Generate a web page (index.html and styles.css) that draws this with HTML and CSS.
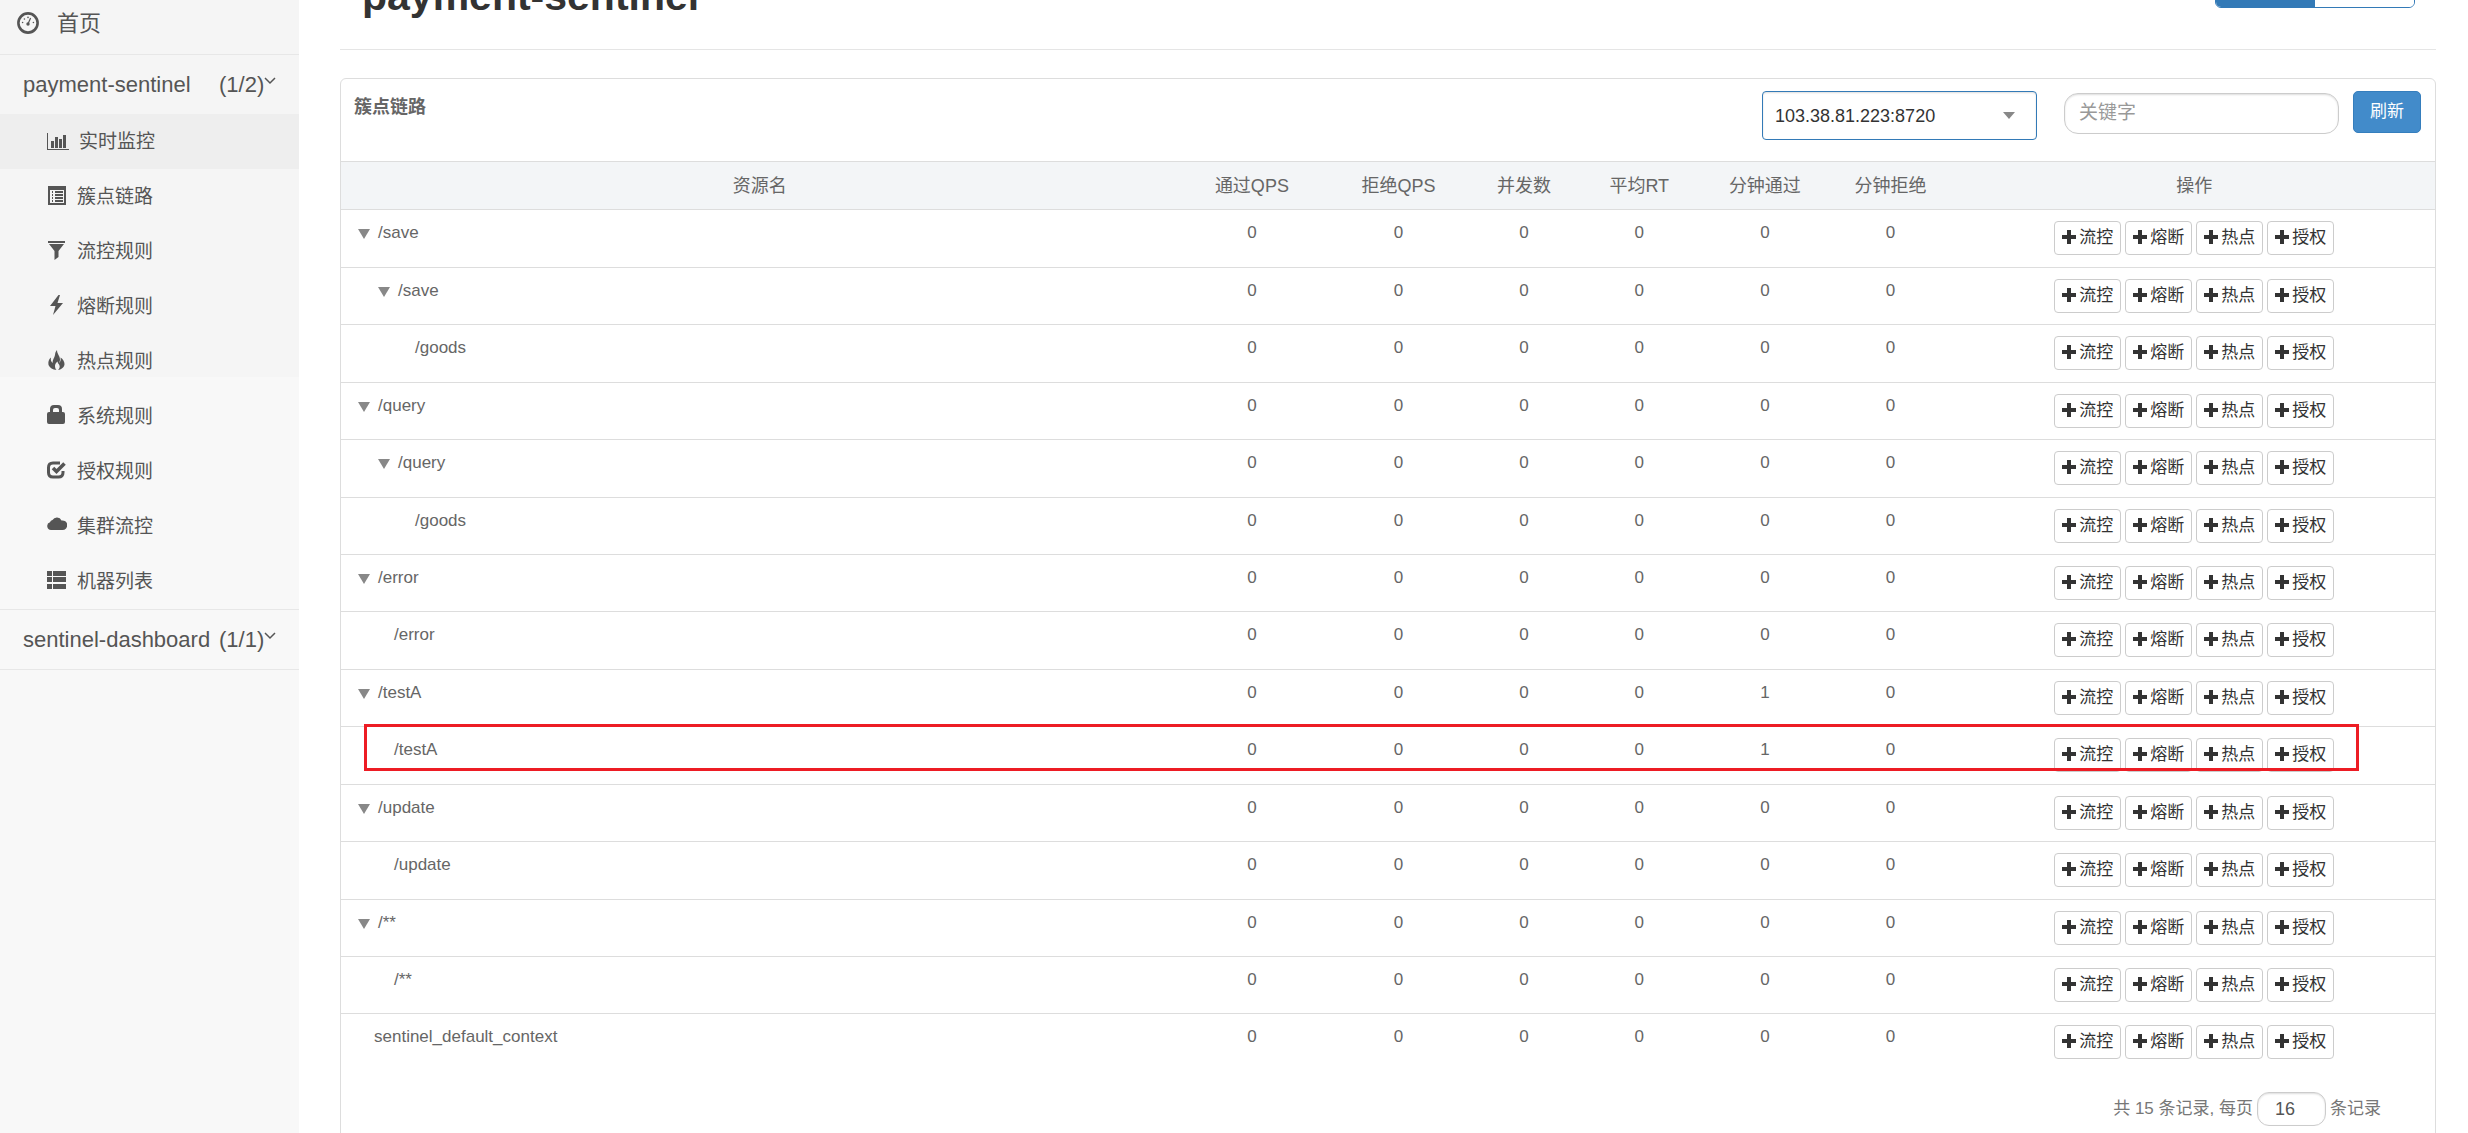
FILE: index.html
```
<!DOCTYPE html>
<html lang="zh-CN">
<head>
<meta charset="utf-8">
<title>payment-sentinel</title>
<link rel="stylesheet" href="styles.css">
</head>
<body>
<div class="layout">
  <nav class="sidebar">
    <a class="home" href="#">
      <svg class="icon-home" viewBox="0 0 22 22"><circle cx="11" cy="11" r="9.6" fill="none" stroke="currentColor" stroke-width="2.6"/><circle cx="11" cy="12" r="1.700" fill="currentColor"/><path d="M11 12L13.600 6" stroke="currentColor" stroke-width="1.200"/><circle cx="5.600" cy="10.500" r=".8"/><circle cx="7.400" cy="7" r=".8"/><circle cx="11" cy="5.400" r=".8"/><circle cx="16.400" cy="10.500" r=".8"/></svg>
      <span>首页</span>
    </a>
    <a class="app" href="#"><span class="app-name">payment-sentinel</span><span>(1/2)</span><svg class="chevron" viewBox="0 0 12 8"><path d="M1 1l5 5 5-5" fill="none" stroke="currentColor" stroke-width="1.5"/></svg></a>
    <ul class="menu">
      <li><a class="active" href="#"><svg class="wide" viewBox="0 0 22 18"><path d="M0 0h1v16h21v1H0zM4 8h3v7H4zM8 4h3v11H8zM12 6h3v9h-3zM16 2h3v13h-3z"/></svg>实时监控</a></li>
      <li><a href="#"><svg viewBox="0 0 20 20"><path fill-rule="evenodd" d="M1 1h18v19H1zM3 5v13h14V5zM5 6h1v2H5zM8 6h8v2H8zM5 9h1v2H5zM8 9h8v2H8zM5 12h1v2H5zM8 12h8v2H8zM5 15h1v2H5zM8 15h8v2H8z"/></svg>簇点链路</a></li>
      <li><a href="#"><svg viewBox="0 0 20 20"><path d="M1 1h17v2H1zM2 4h15l-5.500 7v6l-4 3v-9z"/></svg>流控规则</a></li>
      <li><a href="#"><svg viewBox="0 0 20 20"><path d="M11.500 0L3 11h5.500L6 20 16 8h-5.500L13 0z"/></svg>熔断规则</a></li>
      <li><a href="#"><svg viewBox="0 0 20 20"><path d="M10 0C10 4 13 6 13 9.500c0 1.500-.5 2.500-1 3.500 1.500-1 2-3 1.500-5.500 2.500 1.500 4 4 4 6.500 0 3-2.500 5.300-6.500 6 1.500-1.500 2-3 1.500-4.500-.3-1.500-1.800-2-2-4C9 13 8 14 8 16c0 1.500.5 3 1.500 4-4-.5-6.500-2-8-5C1 12 1.500 9.500 4 7.500 3.500 10 4 11.500 5.500 13c0-3.500 2-5 2.500-8C8.300 3 8.500 1.500 10 0z"/></svg>热点规则</a></li>
      <li><a href="#"><svg viewBox="0 0 20 20"><path fill-rule="evenodd" d="M3 7V4q0-4 4-4h4q4 0 4 4v3h1q2 0 2 2v8q0 2-2 2H2q-2 0-2-2V9q0-2 2-2zM6 7h6V5q0-2-2-2H8q-2 0-2 2z"/></svg>系统规则</a></li>
      <li><a href="#"><svg viewBox="0 0 20 20"><path d="M13 3H6Q1.500 3 1.500 7.500v5Q1.500 17 6 17h5.500q4.500 0 4.500-4.500V11" fill="none" stroke="currentColor" stroke-width="3"/><path d="M6 8l3.500 3.500L17.500 3.500" fill="none" stroke="currentColor" stroke-width="3.600"/></svg>授权规则</a></li>
      <li><a href="#"><svg viewBox="0 0 20 20"><path d="M4 15a4 4 0 0 1-1-7.800A3 3 0 0 1 5.500 5 5 5 0 0 1 14.500 5.500 4.800 4.800 0 1 1 15.500 15z"/></svg>集群流控</a></li>
      <li><a href="#"><svg viewBox="0 0 20 20"><path d="M0 1h5v5H0zM6 1h13v5H6zM0 7h5v5H0zM6 7h13v5H6zM0 14h5v5H0zM6 14h13v5H6z"/></svg>机器列表</a></li>
    </ul>
    <a class="app bordered" href="#"><span class="app-name">sentinel-dashboard</span><span>(1/1)</span><svg class="chevron" viewBox="0 0 12 8"><path d="M1 1l5 5 5-5" fill="none" stroke="currentColor" stroke-width="1.5"/></svg></a>
  </nav>

  <main class="content">
    <header class="page-header">
      <h1>payment-sentinel</h1>
      <div class="view-switch">
        <button type="button" class="on" aria-label="树状视图"></button>
        <button type="button" aria-label="列表视图"></button>
      </div>
    </header>

    <section class="panel">
      <div class="toolbar">
        <h2>簇点链路</h2>
        <select class="machine" aria-label="机器"><option>103.38.81.223:8720</option></select>
        <input class="keyword" type="text" placeholder="关键字" aria-label="关键字">
        <button class="refresh" type="button">刷新</button>
      </div>
      <table class="resources">
        <colgroup><col class="c-name"><col class="c-qps"><col class="c-qps"><col class="c-thread"><col class="c-stat"><col class="c-stat"><col class="c-stat"><col></colgroup>
        <thead>
          <tr><th>资源名</th><th>通过QPS</th><th>拒绝QPS</th><th>并发数</th><th>平均RT</th><th>分钟通过</th><th>分钟拒绝</th><th>操作</th></tr>
        </thead>
        <tbody>
          <tr><td class="name"><button class="toggle" type="button" aria-label="收起"></button>/save</td><td>0</td><td>0</td><td>0</td><td>0</td><td>0</td><td>0</td><td class="ops"><button type="button">流控</button><button type="button">熔断</button><button type="button">热点</button><button type="button">授权</button></td></tr>
          <tr><td class="name level-2"><button class="toggle" type="button" aria-label="收起"></button>/save</td><td>0</td><td>0</td><td>0</td><td>0</td><td>0</td><td>0</td><td class="ops"><button type="button">流控</button><button type="button">熔断</button><button type="button">热点</button><button type="button">授权</button></td></tr>
          <tr><td class="name leaf-3">/goods</td><td>0</td><td>0</td><td>0</td><td>0</td><td>0</td><td>0</td><td class="ops"><button type="button">流控</button><button type="button">熔断</button><button type="button">热点</button><button type="button">授权</button></td></tr>
          <tr><td class="name"><button class="toggle" type="button" aria-label="收起"></button>/query</td><td>0</td><td>0</td><td>0</td><td>0</td><td>0</td><td>0</td><td class="ops"><button type="button">流控</button><button type="button">熔断</button><button type="button">热点</button><button type="button">授权</button></td></tr>
          <tr><td class="name level-2"><button class="toggle" type="button" aria-label="收起"></button>/query</td><td>0</td><td>0</td><td>0</td><td>0</td><td>0</td><td>0</td><td class="ops"><button type="button">流控</button><button type="button">熔断</button><button type="button">热点</button><button type="button">授权</button></td></tr>
          <tr><td class="name leaf-3">/goods</td><td>0</td><td>0</td><td>0</td><td>0</td><td>0</td><td>0</td><td class="ops"><button type="button">流控</button><button type="button">熔断</button><button type="button">热点</button><button type="button">授权</button></td></tr>
          <tr><td class="name"><button class="toggle" type="button" aria-label="收起"></button>/error</td><td>0</td><td>0</td><td>0</td><td>0</td><td>0</td><td>0</td><td class="ops"><button type="button">流控</button><button type="button">熔断</button><button type="button">热点</button><button type="button">授权</button></td></tr>
          <tr><td class="name leaf-2">/error</td><td>0</td><td>0</td><td>0</td><td>0</td><td>0</td><td>0</td><td class="ops"><button type="button">流控</button><button type="button">熔断</button><button type="button">热点</button><button type="button">授权</button></td></tr>
          <tr><td class="name"><button class="toggle" type="button" aria-label="收起"></button>/testA</td><td>0</td><td>0</td><td>0</td><td>0</td><td>1</td><td>0</td><td class="ops"><button type="button">流控</button><button type="button">熔断</button><button type="button">热点</button><button type="button">授权</button></td></tr>
          <tr class="marked"><td class="name leaf-2">/testA<span class="marker"></span></td><td>0</td><td>0</td><td>0</td><td>0</td><td>1</td><td>0</td><td class="ops"><button type="button">流控</button><button type="button">熔断</button><button type="button">热点</button><button type="button">授权</button></td></tr>
          <tr><td class="name"><button class="toggle" type="button" aria-label="收起"></button>/update</td><td>0</td><td>0</td><td>0</td><td>0</td><td>0</td><td>0</td><td class="ops"><button type="button">流控</button><button type="button">熔断</button><button type="button">热点</button><button type="button">授权</button></td></tr>
          <tr><td class="name leaf-2">/update</td><td>0</td><td>0</td><td>0</td><td>0</td><td>0</td><td>0</td><td class="ops"><button type="button">流控</button><button type="button">熔断</button><button type="button">热点</button><button type="button">授权</button></td></tr>
          <tr><td class="name"><button class="toggle" type="button" aria-label="收起"></button>/**</td><td>0</td><td>0</td><td>0</td><td>0</td><td>0</td><td>0</td><td class="ops"><button type="button">流控</button><button type="button">熔断</button><button type="button">热点</button><button type="button">授权</button></td></tr>
          <tr><td class="name leaf-2">/**</td><td>0</td><td>0</td><td>0</td><td>0</td><td>0</td><td>0</td><td class="ops"><button type="button">流控</button><button type="button">熔断</button><button type="button">热点</button><button type="button">授权</button></td></tr>
          <tr><td class="name leaf-1">sentinel_default_context</td><td>0</td><td>0</td><td>0</td><td>0</td><td>0</td><td>0</td><td class="ops"><button type="button">流控</button><button type="button">熔断</button><button type="button">热点</button><button type="button">授权</button></td></tr>
        </tbody>
      </table>
      <footer class="pager">
        <label for="page-size">共 15 条记录, 每页</label>
        <input id="page-size" type="text" value="16">
        <span>条记录</span>
      </footer>
    </section>
  </main>
</div>
</body>
</html>
```
FILE: styles.css
```
* {
  box-sizing: border-box;
}

body {
  margin: 0;
  height: 100vh;
  overflow: hidden;
  background: #fff;
  color: #666;
  font: 400 17px/24px "Liberation Sans", "Noto Sans CJK SC", sans-serif;
}

button,
input,
select {
  margin: 0;
  font: inherit;
}

.layout {
  display: flex;
  min-height: 100vh;
}

/* Sidebar */
.sidebar {
  flex: 0 0 299px;
  background: linear-gradient(#f5f5f5 377px, #f8f8f8 377px);
  color: #555;
}

.sidebar a {
  display: flex;
  align-items: center;
  color: inherit;
  text-decoration: none;
}

.sidebar svg {
  fill: currentColor;
}

.home {
  height: 55px;
  padding: 0 0 6px 17px;
  gap: 18px;
  border-bottom: 1px solid #e7e7e7;
  font-size: 22px;
}

.icon-home {
  width: 22px;
  height: 22px;
  margin-bottom: 2px;
}

.app {
  height: 59px;
  padding-left: 23px;
  font-size: 22px;
}

.app.bordered {
  height: 61px;
  border-top: 1px solid #e7e7e7;
  border-bottom: 1px solid #e7e7e7;
}

.app-name {
  width: 196px;
}

.chevron {
  width: 12px;
  height: 8px;
  margin-bottom: 8px;
}

.menu {
  margin: 0;
  padding: 0;
  list-style: none;
}

.menu a {
  height: 55px;
  padding-left: 47px;
  gap: 10px;
  font-size: 19px;
}

.menu a.active {
  background: #eee;
}

.menu svg {
  width: 20px;
  height: 20px;
  margin-bottom: 4px;
}

.menu svg.wide {
  width: 22px;
  height: 18px;
  margin-bottom: 0;
}

/* Content */
.content {
  flex: 1;
  min-width: 0;
  padding: 0 32px 0 41px;
}

.page-header {
  display: flex;
  justify-content: space-between;
  align-items: flex-start;
  height: 50px;
  padding: 0 21px 0 22px;
  border-bottom: 1px solid #e5e5e5;
  overflow: hidden;
}

h1 {
  margin: -26px 0 0;
  color: #333;
  font-size: 41px;
  font-weight: 700;
  line-height: 44px;
}

.view-switch {
  display: flex;
  margin-top: -34px;
  border: 1px solid #337ab7;
  border-radius: 6px;
  overflow: hidden;
}

.view-switch button {
  width: 99px;
  height: 40px;
  border: 0;
  background: #fff;
}

.view-switch .on {
  background: #337ab7;
}

.panel {
  margin-top: 28px;
  border: 1px solid #ddd;
  border-radius: 6px;
}

.toolbar {
  display: flex;
  align-items: flex-start;
  height: 82px;
  padding: 12px 14px 0 13px;
}

h2 {
  flex: 1;
  margin: 4px 0 0;
  font-size: 18px;
  font-weight: 700;
  line-height: 24px;
}

.machine {
  appearance: none;
  width: 275px;
  height: 49px;
  margin-right: 27px;
  padding: 0 12px;
  border: 1px solid #337ab7;
  border-radius: 4px;
  background: url("data:image/svg+xml,%3Csvg xmlns='http://www.w3.org/2000/svg' viewBox='0 0 12 9'%3E%3Cpath fill='%23888' d='M0 1h12L6 8z'/%3E%3C/svg%3E") no-repeat right 21px center / 12px 9px #fff;
  box-shadow: inset 0 1px 2px #ddd;
  color: #333;
  font-size: 18px;
}

.keyword {
  width: 275px;
  height: 41px;
  margin: 2px 14px 0 0;
  padding: 0 14px 1px;
  border: 1px solid #ccc;
  border-radius: 14px;
  box-shadow: inset 0 1px 2px #ddd;
  color: #555;
  font-size: 19px;
}

.keyword::placeholder {
  color: #999;
}

.refresh {
  width: 68px;
  height: 42px;
  padding: 0;
  border: 1px solid #357ebd;
  border-radius: 5px;
  background: #428bca;
  color: #fff;
}

.resources {
  width: 100%;
  table-layout: fixed;
  border-collapse: separate;
  border-spacing: 0;
}

.c-name { width: 40%; }
.c-qps { width: 7%; }
.c-thread { width: 5%; }
.c-stat { width: 6%; }

th {
  height: 49px;
  padding: 0;
  border-top: 1px solid #ddd;
  border-bottom: 1px solid #ddd;
  background: #f3f5f7;
  font-size: 18px;
  font-weight: 400;
}

td {
  height: 57px;
  padding: 11px 0 0;
  border-bottom: 1px solid #ddd;
  text-align: center;
  vertical-align: top;
}

tbody tr:nth-child(7n + 1) td,
tbody tr:nth-child(7n + 3) td,
tbody tr:nth-child(7n + 5) td {
  height: 58px;
}

tbody tr:last-child td {
  border-bottom: 0;
}

.name {
  padding-left: 17px;
  text-align: left;
}

.level-2 { padding-left: 37px; }
.leaf-1 { padding-left: 33px; }
.leaf-2 { padding-left: 53px; }
.leaf-3 { padding-left: 74px; }

.toggle {
  width: 12px;
  height: 10px;
  margin-right: 8px;
  padding: 0;
  border: 0;
  background: #888;
  clip-path: polygon(0 0, 100% 0, 50% 100%);
  vertical-align: -1px;
}

.ops button {
  display: inline-flex;
  align-items: center;
  width: 67px;
  height: 34px;
  padding: 0 7px;
  gap: 3px;
  border: 1px solid #ccc;
  border-radius: 4px;
  background: #fff;
  color: #333;
  vertical-align: top;
}

.ops button + button {
  margin-left: 4px;
}

.ops button::before {
  content: "";
  width: 14px;
  height: 14px;
  margin-bottom: 2px;
  background:
    linear-gradient(#333, #333) center / 14px 4px no-repeat,
    linear-gradient(#333, #333) center / 4px 14px no-repeat;
}

.marked {
  position: relative;
}

.marker {
  position: absolute;
  top: -3px;
  left: 23px;
  right: 76px;
  height: 47px;
  border: 3px solid #ed1c24;
  pointer-events: none;
}

.pager {
  display: flex;
  justify-content: flex-end;
  align-items: center;
  gap: 4px;
  padding: 20px 54px 24px;
  color: #777;
}

.pager input {
  width: 69px;
  height: 34px;
  padding: 0 17px;
  border: 1px solid #ccc;
  border-radius: 12px;
  box-shadow: inset 0 1px 2px #ddd;
  color: #555;
  font-size: 18px;
}
```
